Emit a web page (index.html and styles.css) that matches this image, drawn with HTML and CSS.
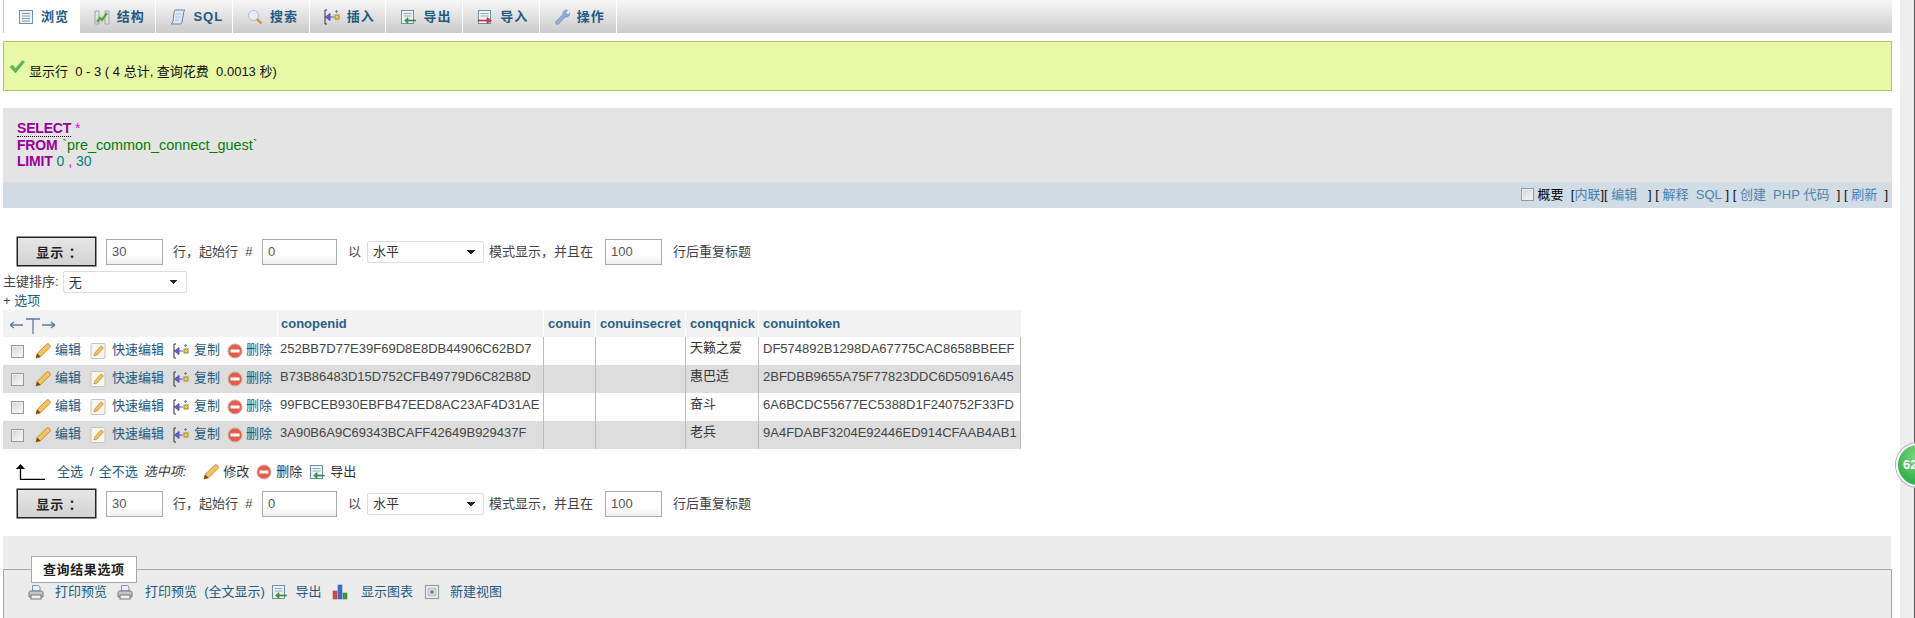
FILE: index.html
```html
<!DOCTYPE html>
<html lang="zh">
<head>
<meta charset="utf-8">
<title>phpMyAdmin</title>
<link rel="stylesheet" href="styles.css">
</head>
<body>
<svg class="defs" width="0" height="0" aria-hidden="true">
  <defs>
    <symbol id="i-browse" viewBox="0 0 16 16"><rect x="1.5" y="1.5" width="13" height="13" fill="#eef3f8" stroke="#6f8fae"/><path d="M4 4.5h8M4 7h8M4 9.500h8M4 12h8" stroke="#7f9cb8"/></symbol>
    <symbol id="i-struct" viewBox="0 0 16 16"><path d="M1 2h4v13H1zM11 2h4v13h-4z" fill="#dfe3e6" stroke="#9aa5ad"/><path d="M3 13l3-4 2 2 5-7" fill="none" stroke="#5da32f" stroke-width="2.200"/></symbol>
    <symbol id="i-sql" viewBox="0 0 16 16"><path d="M5 1h10c-1 1-1.500 2-1.500 4L12 13c-.3 1.500-1 2-2 2H1c1-.5 1.700-1.200 2-2.500L4 4C4.200 2.500 4.300 1.500 5 1z" fill="#dce8f4" stroke="#5f84ab"/><path d="M6 5h5M5.500 8h5M5 11h4" stroke="#a9c1d8"/></symbol>
    <symbol id="i-search" viewBox="0 0 16 16"><circle cx="6.500" cy="6.500" r="5" fill="#e3eef8" stroke="#a9bccd"/><path d="M10 10l4.500 4.500" stroke="#d2903c" stroke-width="2.400"/></symbol>
    <symbol id="i-insert" viewBox="0 0 16 16"><path d="M3 1H1v14h2" fill="none" stroke="#333"/><path d="M1 8h1" stroke="#333"/><path d="M10 8H6V4.500L1.500 8 6 11.500V8" fill="#6a5acd" stroke="#5a4fc0"/><rect x="11" y="6" width="4" height="4" fill="#f0d050" stroke="#a08a20"/><path d="M12.500 1v3M11 2.500h3" stroke="#6a7fc0"/></symbol>
    <symbol id="i-export" viewBox="0 0 16 16"><rect x="1.500" y="1.500" width="12" height="13" fill="#eef3f8" stroke="#6f8fae"/><path d="M3.500 4.500h8M3.500 7h8" stroke="#8fa8c0"/><path d="M15.500 11H8V8.500L4.500 11.500 8 14.500V12h7.500z" fill="#3e9a3e" stroke="#2f7d2f" stroke-width=".6"/></symbol>
    <symbol id="i-import" viewBox="0 0 16 16"><rect x="1.500" y="1.500" width="12" height="13" fill="#eef3f8" stroke="#6f8fae"/><path d="M3.500 4.500h8M3.500 7h8" stroke="#8fa8c0"/><path d="M1 11h9V8.500l4.500 3-4.500 3V12H1z" fill="#d83a3a" stroke="#b52a2a" stroke-width=".6"/></symbol>
    <symbol id="i-wrench" viewBox="0 0 16 16"><path d="M2 12.500L9 5.500C8.500 3 10.500.8 13.500 1.200L11.500 3.500l1 2 2.300.3 1-2C16 6.500 14 8.500 11 8L4.500 15c-1.500 1.500-3.800-.8-2.500-2.500z" fill="#8fb0d8" stroke="#6488b5" stroke-width=".7"/></symbol>
    <symbol id="i-pencil" viewBox="0 0 16 16"><path d="M1 15l1.200-4.500L11.500 1.200c.8-.7 1.800-.7 2.500 0l.8.800c.7.800.7 1.700 0 2.500L5.500 13.800z" fill="#f2c55a" stroke="#b9822a" stroke-width=".9"/><path d="M1 15l1.200-4.500 3.300 3.300z" fill="#6b4a20"/></symbol>
    <symbol id="i-quick" viewBox="0 0 16 16"><rect x="1" y=".5" width="14" height="15" rx="1" fill="#f7f5f0" stroke="#c9c4bc"/><path d="M4 13l.800-3L10.500 3.500c.5-.4 1.200-.4 1.600 0l.6.6c.4.500.4 1.100 0 1.600L7 12z" fill="#f2c55a" stroke="#b9822a" stroke-width=".7"/></symbol>
    <symbol id="i-del" viewBox="0 0 16 16"><circle cx="8" cy="8" r="7" fill="#e85a4a" stroke="#c9b3ad"/><rect x="3.500" y="6.500" width="9" height="3" fill="#fff"/></symbol>
    <symbol id="i-print" viewBox="0 0 16 16"><path d="M4.500 7V1.500h6L12 3v4z" fill="#eaf0f8" stroke="#7c92ad"/><path d="M1 8.500C1 7.500 2 7 3 7h10c1 0 2 .5 2 1.500V13H1z" fill="#c3c7cc" stroke="#70757c"/><rect x="3" y="11" width="10" height="4" fill="#eef0f2" stroke="#70757c"/></symbol>
    <symbol id="i-chart" viewBox="0 0 16 16"><rect x="1" y="7" width="4" height="8" fill="#e04a3a" stroke="#a83226" stroke-width=".5"/><rect x="6" y="1" width="4" height="14" fill="#3a6fd8" stroke="#2a50a0" stroke-width=".5"/><rect x="11" y="9" width="4" height="6" fill="#3d9a3d" stroke="#2a7a2a" stroke-width=".5"/></symbol>
    <symbol id="i-view" viewBox="0 0 16 16"><rect x="1.500" y="1.500" width="13" height="13" fill="#eef3ee" stroke="#7f9a85"/><rect x="4" y="4" width="8" height="8" fill="#cfd6e6" stroke="#9aa8b8" stroke-width=".6"/><circle cx="8" cy="8" r="1.800" fill="#8a6fa8"/></symbol>
    <symbol id="i-check" viewBox="0 0 16 14"><path d="M1 7l2.500-2L6.500 8.500 13.500 .5 15.500 2 6.500 13z" fill="#5cb85c" stroke="#4a9d4a" stroke-width=".5"/></symbol>
  </defs>
</svg>

<div class="page">
  <nav class="tabs">
    <a class="tab active"><svg class="ico"><use href="#i-browse"/></svg>浏览</a>
    <a class="tab"><svg class="ico"><use href="#i-struct"/></svg>结构</a>
    <a class="tab"><svg class="ico"><use href="#i-sql"/></svg>SQL</a>
    <a class="tab"><svg class="ico"><use href="#i-search"/></svg>搜索</a>
    <a class="tab"><svg class="ico"><use href="#i-insert"/></svg>插入</a>
    <a class="tab"><svg class="ico"><use href="#i-export"/></svg>导出</a>
    <a class="tab"><svg class="ico"><use href="#i-import"/></svg>导入</a>
    <a class="tab"><svg class="ico"><use href="#i-wrench"/></svg>操作</a>
  </nav>

  <div class="notice"><svg class="check"><use href="#i-check"/></svg><span class="notice-text">显示行 &nbsp;0 - 3 ( 4 总计, 查询花费 &nbsp;0.0013 秒)</span></div>

  <div class="sql">
    <div><span class="kw kw-under">SELECT</span> <span class="op">*</span></div>
    <div><span class="kw">FROM</span> <span class="tbl">`pre_common_connect_guest`</span></div>
    <div><span class="kw">LIMIT</span> <span class="num">0</span> <span class="op">,</span> <span class="num">30</span></div>
  </div>
  <div class="sqlbar">
    <input type="checkbox" class="cb"><b class="profile">概要</b>&nbsp;&nbsp;[<a>内联</a>][&nbsp;<a>编辑</a>&nbsp;&nbsp;&nbsp;] [&nbsp;<a>解释&nbsp;&nbsp;SQL</a>&nbsp;] [&nbsp;<a>创建&nbsp;&nbsp;PHP&nbsp;代码</a>&nbsp;&nbsp;] [&nbsp;<a>刷新</a>&nbsp;&nbsp;]
  </div>

  <form class="navrow first">
    <button type="button" class="showbtn">显示 ：</button>
    <input class="txt w-num" value="30">
    <span class="lbl lbl-row">行，起始行 &nbsp;#</span>
    <input class="txt w-start" value="0">
    <span class="lbl lbl-by">以</span>
    <select class="sel sel-mode"><option>水平</option></select>
    <span class="lbl lbl-mode">模式显示，并且在</span>
    <input class="txt w-num" value="100">
    <span class="lbl lbl-end">行后重复标题</span>
  </form>

  <div class="sortrow">主键排序:<select class="sel sel-sort"><option>无</option></select></div>
  <div class="options">+ <a>选项</a></div>

  <table class="grid">
    <colgroup><col class="c0"><col class="c1"><col class="c2"><col class="c3"><col class="c4"><col class="c5"></colgroup>
    <thead>
      <tr>
        <th class="pointer"><svg class="colptr" viewBox="0 0 48 17"><path d="M1 8h13M1 8l4-3M1 8l4 3M17 2h14M24 2v15M33 8h13M46 8l-4-3M46 8l-4 3" fill="none" stroke="#5b7ba3" stroke-width="1.300"/></svg></th>
        <th>conopenid</th><th>conuin</th><th>conuinsecret</th><th>conqqnick</th><th>conuintoken</th>
      </tr>
    </thead>
    <tbody>
      <tr>
        <td class="actions"><div class="acts"><input type="checkbox" class="cb"><svg class="ico a-edit"><use href="#i-pencil"/></svg><a>编辑</a><svg class="ico a-quick"><use href="#i-quick"/></svg><a>快速编辑</a><svg class="ico a-copy"><use href="#i-insert"/></svg><a>复制</a><svg class="ico a-del"><use href="#i-del"/></svg><a>删除</a></div></td>
        <td>252BB7D77E39F69D8E8DB44906C62BD7</td><td class="bl"></td><td class="bl"></td><td class="bl nick">天籁之爱</td><td class="bl last">DF574892B1298DA67775CAC8658BBEEF</td>
      </tr>
      <tr>
        <td class="actions"><div class="acts"><input type="checkbox" class="cb"><svg class="ico a-edit"><use href="#i-pencil"/></svg><a>编辑</a><svg class="ico a-quick"><use href="#i-quick"/></svg><a>快速编辑</a><svg class="ico a-copy"><use href="#i-insert"/></svg><a>复制</a><svg class="ico a-del"><use href="#i-del"/></svg><a>删除</a></div></td>
        <td>B73B86483D15D752CFB49779D6C82B8D</td><td class="bl"></td><td class="bl"></td><td class="bl nick">惠巴适</td><td class="bl last">2BFDBB9655A75F77823DDC6D50916A45</td>
      </tr>
      <tr>
        <td class="actions"><div class="acts"><input type="checkbox" class="cb"><svg class="ico a-edit"><use href="#i-pencil"/></svg><a>编辑</a><svg class="ico a-quick"><use href="#i-quick"/></svg><a>快速编辑</a><svg class="ico a-copy"><use href="#i-insert"/></svg><a>复制</a><svg class="ico a-del"><use href="#i-del"/></svg><a>删除</a></div></td>
        <td>99FBCEB930EBFB47EED8AC23AF4D31AE</td><td class="bl"></td><td class="bl"></td><td class="bl nick">奋斗</td><td class="bl last">6A6BCDC55677EC5388D1F240752F33FD</td>
      </tr>
      <tr>
        <td class="actions"><div class="acts"><input type="checkbox" class="cb"><svg class="ico a-edit"><use href="#i-pencil"/></svg><a>编辑</a><svg class="ico a-quick"><use href="#i-quick"/></svg><a>快速编辑</a><svg class="ico a-copy"><use href="#i-insert"/></svg><a>复制</a><svg class="ico a-del"><use href="#i-del"/></svg><a>删除</a></div></td>
        <td>3A90B6A9C69343BCAFF42649B929437F</td><td class="bl"></td><td class="bl"></td><td class="bl nick">老兵</td><td class="bl last">9A4FDABF3204E92446ED914CFAAB4AB1</td>
      </tr>
    </tbody>
  </table>

  <div class="selbar">
    <svg class="arrow" viewBox="0 0 29 16"><path d="M4.500 4v11.500H29" fill="none" stroke="#000" stroke-width="1.300"/><path d="M0 5l4.500-5L9 5z" fill="#000"/></svg>
    <a class="all">全选</a><span class="slash">/</span><a>全不选</a>
    <i class="with">选中项:</i>
    <svg class="ico s-edit"><use href="#i-pencil"/></svg><span class="stxt">修改</span>
    <svg class="ico s-del"><use href="#i-del"/></svg><span class="stxt">删除</span>
    <svg class="ico s-exp"><use href="#i-export"/></svg><span class="stxt stxt-last">导出</span>
  </div>

  <form class="navrow">
    <button type="button" class="showbtn">显示 ：</button>
    <input class="txt w-num" value="30">
    <span class="lbl lbl-row">行，起始行 &nbsp;#</span>
    <input class="txt w-start" value="0">
    <span class="lbl lbl-by">以</span>
    <select class="sel sel-mode"><option>水平</option></select>
    <span class="lbl lbl-mode">模式显示，并且在</span>
    <input class="txt w-num" value="100">
    <span class="lbl lbl-end">行后重复标题</span>
  </form>

  <section class="results">
    <fieldset class="resbox">
      <legend>查询结果选项</legend>
      <div class="reslinks">
        <svg class="ico"><use href="#i-print"/></svg><a>打印预览</a>
        <svg class="ico"><use href="#i-print"/></svg><a>打印预览 &nbsp;(全文显示)</a>
        <svg class="ico"><use href="#i-export"/></svg><a>导出</a>
        <svg class="ico"><use href="#i-chart"/></svg><a>显示图表</a>
        <svg class="ico"><use href="#i-view"/></svg><a>新建视图</a>
      </div>
    </fieldset>
  </section>
</div>

<div class="scroller"></div>
<div class="badge"><span>62</span></div>
</body>
</html>
```
FILE: styles.css
```css
* { box-sizing: border-box; }
html, body { margin: 0; height: 618px; overflow: hidden; background: #fff; }
body { position: relative; font: 13px/16px "Liberation Sans", "Noto Sans CJK SC", sans-serif; color: #444; }
a { color: #235a81; text-decoration: none; }
.defs { position: absolute; }
.ico { width: 16px; height: 16px; flex: none; }
.page { width: 1892px; padding-left: 3px; }

.tabs { display: flex; height: 33px; background: linear-gradient(#f7f7f7, #cbcbcb); }
.tab { width: 76.700px; display: flex; align-items: center; gap: 7px; padding-left: 14px; font-weight: 700; border-right: 1px solid #fff; color: #235a81; letter-spacing: 1px; }
.tab.active { background: #fff; border-left: 1px solid #ccc; padding-left: 14px; }

.notice { height: 50px; margin-top: 8px; padding: 15px 0 0 5px; display: flex; align-items: flex-start; background: #e8f9a5; border: 1px solid #b3c56c; color: #111; }
.check { width: 16px; height: 14px; margin-top: 3px; flex: none; }
.notice-text { margin: 7px 0 0 4px; }

.sql { height: 74px; margin-top: 17px; padding: 12px 0 0 14px; background: #e4e4e4; font-size: 14px; line-height: 16.500px; }
.kw { color: #990099; font-weight: 700; letter-spacing: -.2px; }
.kw-under { border-bottom: 1px dotted #000; }
.op { color: #ff00ff; }
.tbl { color: #008000; font-size: 14.400px; margin-left: 1px; }
.num { color: #008080; }
.sqlbar { height: 26px; padding-right: 4px; text-align: right; line-height: 26px; background: #d2dce4; color: #111; white-space: nowrap; }
.sqlbar a { color: #4a83b0; }
.profile { color: #000; font-weight: 400; margin-left: 4px; }
.cb { appearance: none; width: 13px; height: 13px; margin: 0; flex: none; vertical-align: -2px; border: 1px solid #999; background: linear-gradient(135deg, #d4d4d4, #fbfbfb); box-shadow: inset 0 0 0 1px #eee; }

.navrow { display: flex; align-items: center; height: 29px; margin-left: 14px; margin-top: 7px; }
.navrow.first { margin-top: 29px; }
.showbtn { width: 79px; height: 29px; padding: 0 0 0 6px; font: 700 13px "Liberation Sans", "Noto Sans CJK SC", sans-serif; color: #222; background: linear-gradient(#e6e6e6, #d2d2d2); border: 1px solid #222; box-shadow: 0 0 0 .5px #222; letter-spacing: 1px; }
.txt { height: 26px; padding: 0 5px; font: 13px "Liberation Sans", sans-serif; color: #555; border: 1px solid #aaa; background: linear-gradient(#fff 60%, #eee); }
.w-num { width: 57px; }
.w-start { width: 75px; }
.navrow .w-num:first-of-type { margin-left: 10px; }
.lbl { white-space: nowrap; color: #444; }
.lbl-row { width: 88px; margin-left: 10px; padding-right: 0; }
.lbl-by { width: 19px; margin-left: 11px; }
.navrow .w-start { margin-left: 1px; }
.lbl-mode { width: 116px; margin-left: 5px; }
.lbl-end { margin-left: 11px; }
.sel { appearance: none; height: 22px; padding: 0 0 0 5px; font: 13px "Liberation Sans", "Noto Sans CJK SC", sans-serif; color: #333; border: 1px solid #ddd; border-radius: 2px; background-color: #fff; background-image: linear-gradient(45deg, transparent 50%, #222 50%), linear-gradient(-45deg, transparent 50%, #222 50%); background-size: 4px 4px; background-repeat: no-repeat; background-position: calc(100% - 12px) 8px, calc(100% - 8px) 8px; }
.sel-mode { width: 117px; }
.sel-sort { width: 124px; margin-left: 4px; }

.sortrow { display: flex; align-items: center; height: 22px; margin-top: 5px; }
.options { height: 17px; line-height: 15px; }

.grid { width: 1018px; table-layout: fixed; border-collapse: separate; border-spacing: 0; }
.c0 { width: 274px; }
.c1 { width: 266px; }
.c2 { width: 52px; }
.c3 { width: 90px; }
.c4 { width: 73px; }
.c5 { width: 263px; }
.grid th { height: 27px; padding: 0 0 0 4px; text-align: left; font-weight: 700; color: #2a5f8a; background: #f2f2f2; border-left: 1px solid #fff; white-space: nowrap; }
.grid th.pointer { padding: 0 0 0 6px; border-left: 0; }
.grid th:nth-child(2) { padding-left: 3px; }
.colptr { width: 48px; height: 17px; display: block; margin-top: 4px; }
.grid td { height: 28px; padding: 0 0 5px 3px; white-space: nowrap; overflow: hidden; color: #444; }
.grid tbody tr:nth-child(even) td { background: #ddd; }
.grid td.actions { padding: 0 0 0 8px; }
.grid td.bl { border-left: 1px solid #bbb; padding-left: 4px; }
.grid td.last { border-right: 1px solid #bbb; }
.grid td.nick { padding-bottom: 6px; color: #333; }
.acts { display: flex; align-items: center; white-space: nowrap; margin-top: 1px; }
.acts a { position: relative; top: -2px; }
.acts .ico { position: relative; top: -1px; }
.a-edit { margin: 0 4px 0 11px; }
.a-quick { margin: 0 6px 0 9px; }
.a-copy { margin: 0 5px 0 9px; }
.a-del { margin: 0 3px 0 7px; }

.selbar { display: flex; align-items: center; height: 20px; margin: 13px 0 0 13px; white-space: nowrap; }
.arrow { width: 29px; height: 16px; flex: none; }
.all { margin-left: 12px; }
.slash { margin: 0 5px 0 7px; color: #235a81; }
.with { margin: 0 0 0 6px; color: #333; }
.stxt { color: #333; margin-left: 4px; }
.stxt-last { margin-left: 5px; }
.s-edit { margin-left: 17px; }
.s-del { margin-left: 7px; }
.s-exp { margin-left: 7px; }

.results { height: 82px; margin-top: 18px; padding-top: 20px; background: #ececec; width: 1888px; }
.resbox { margin: 0; padding: 0; width: 1889px; min-width: 0; height: 70px; border: 1px solid #a5a5a5; border-bottom: 0; background: #ececec; }
.resbox legend { margin-left: 27px; padding: 0 11px; height: 27px; line-height: 25px; font-weight: 700; color: #222; background: #fff; border: 1px solid #aaa; letter-spacing: .6px; }
.reslinks { display: flex; align-items: center; height: 17px; padding-left: 24px; margin-top: 0; }
.reslinks a { margin: 0 10px 0 11px; white-space: nowrap; }
.reslinks a:nth-of-type(2) { margin: 0 6px 0 12px; }
.reslinks a:nth-of-type(3) { margin: 0 10.400px 0 8.600px; }
.reslinks a:nth-of-type(4) { margin: 0 10.600px 0 13px; }
.reslinks a:nth-of-type(5) { margin-left: 10.600px; }

.scroller { position: absolute; top: 0; right: 0; width: 15px; height: 618px; background: #eee; border-right: 1px solid #555; }
.badge { position: absolute; left: 1896px; top: 443px; width: 44px; height: 44px; border-radius: 50%; background: radial-gradient(circle at 50% 30%, #7fdc83, #35b24a 70%); border: 2px solid #fff; box-shadow: 0 0 0 1px #aaa; color: #fff; font-weight: 700; }
.badge span { position: absolute; left: 5px; top: 12px; }
```
